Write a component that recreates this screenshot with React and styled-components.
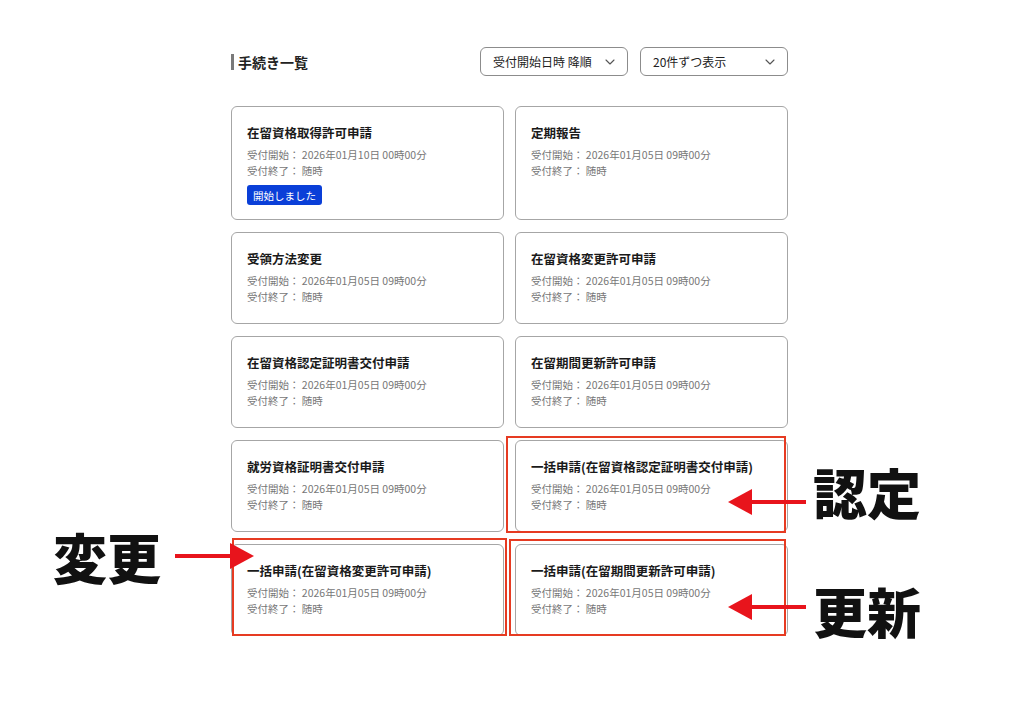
import React from "react";
import styled, { createGlobalStyle } from "styled-components";

const GlobalStyle = createGlobalStyle`
  html, body {
    margin: 0;
    padding: 0;
    background: #ffffff;
  }
  body {
    font-family: "Noto Sans CJK JP", "Noto Sans", sans-serif;
    color: #1a1a1a;
  }
`;

const Screen = styled.div`
  position: relative;
  width: 1024px;
  height: 701px;
  overflow: hidden;
  background: #fff;
`;

const Panel = styled.section`
  width: 557px;
  margin-left: 231px;
  padding-top: 47px;
`;

const Header = styled.div`
  display: flex;
  align-items: center;
  justify-content: space-between;
  height: 29px;
`;

const Title = styled.h2`
  margin: 0;
  padding-left: 4px;
  border-left: 3px solid #7a7a7a;
  font-size: 14px;
  line-height: 16px;
  font-weight: 700;
  color: #222;
`;

const Controls = styled.div`
  display: flex;
  gap: 12px;
`;

const Select = styled.div`
  box-sizing: border-box;
  width: 148px;
  height: 29px;
  padding: 0 12px 0 12px;
  display: flex;
  align-items: center;
  justify-content: space-between;
  border: 1px solid #8c8c8c;
  border-radius: 6px;
  font-size: 12px;
  color: #222;
  background: #fff;
`;

const Grid = styled.div`
  margin-top: 30px;
  display: grid;
  grid-template-columns: 273px 273px;
  column-gap: 11px;
  row-gap: 12px;
`;

const Card = styled.article`
  box-sizing: border-box;
  min-height: 92px;
  padding: 18px 15px 18px;
  border: 1px solid #a6a6a6;
  border-radius: 6px;
  background: #fff;
`;

const CardTitle = styled.h3`
  margin: 0 0 6px;
  font-size: 12.5px;
  line-height: 16px;
  font-weight: 700;
  color: #1a1a1a;
  white-space: nowrap;
`;

const InfoLine = styled.p`
  margin: 0;
  font-size: 10.5px;
  line-height: 16px;
  color: #777;
  white-space: nowrap;
`;

const Badge = styled.div`
  display: flex;
  align-items: center;
  width: fit-content;
  height: 20px;
  margin: 6px 0 -4px;
  padding: 0 6px;
  border-radius: 3px;
  background: #0a3fd8;
  color: #fff;
  font-size: 10.5px;
`;

const Overlay = styled.div`
  position: absolute;
  inset: 0;
  pointer-events: none;
`;

const RedFrame = styled.div`
  position: absolute;
  box-sizing: border-box;
  border: 2px solid #e63b22;
`;

const Label = styled.span`
  position: absolute;
  font-size: 54px;
  line-height: 1;
  font-weight: 900;
  color: #111;
  white-space: nowrap;
`;

const ArrowSvg = styled.svg`
  position: absolute;
  overflow: visible;
`;

const Chevron = () => (
  <svg width="10" height="6" viewBox="0 0 10 6" fill="none">
    <path d="M1 1l4 4 4-4" stroke="#555" strokeWidth="1.1" strokeLinecap="round" strokeLinejoin="round" />
  </svg>
);

// arrow drawn in a box; "dir" = which way the head points
const Arrow = ({ x, y, length, dir }) => {
  const head = 24;
  const half = 13;
  const left = dir === "left";
  const line = left ? `M${head - 2} 0 H${length}` : `M0 0 H${length - head + 2}`;
  const tip = left
    ? `M0 0 L${head} ${-half} L${head} ${half} Z`
    : `M${length} 0 L${length - head} ${-half} L${length - head} ${half} Z`;
  return (
    <ArrowSvg style={{ left: x, top: y }} width={length} height="1">
      <path d={line} stroke="#e8141c" strokeWidth="4" />
      <path d={tip} fill="#e8141c" />
    </ArrowSvg>
  );
};

const procedures = [
  { title: "在留資格取得許可申請", start: "2026年01月10日 00時00分", started: true },
  { title: "定期報告" },
  { title: "受領方法変更" },
  { title: "在留資格変更許可申請" },
  { title: "在留資格認定証明書交付申請" },
  { title: "在留期間更新許可申請" },
  { title: "就労資格証明書交付申請" },
  { title: "一括申請(在留資格認定証明書交付申請)" },
  { title: "一括申請(在留資格変更許可申請)" },
  { title: "一括申請(在留期間更新許可申請)" },
];

export default function App() {
  return (
    <Screen>
      <GlobalStyle />
      <Panel>
        <Header>
          <Title>手続き一覧</Title>
          <Controls>
            <Select>
              <span>受付開始日時 降順</span>
              <Chevron />
            </Select>
            <Select>
              <span>20件ずつ表示</span>
              <Chevron />
            </Select>
          </Controls>
        </Header>
        <Grid>
          {procedures.map((p) => (
            <Card key={p.title}>
              <CardTitle>{p.title}</CardTitle>
              <InfoLine>受付開始： {p.start || "2026年01月05日 09時00分"}</InfoLine>
              <InfoLine>受付終了： 随時</InfoLine>
              {p.started && <Badge>開始しました</Badge>}
            </Card>
          ))}
        </Grid>
      </Panel>

      <Overlay>
        <RedFrame style={{ left: 506, top: 436, width: 280, height: 97 }} />
        <RedFrame style={{ left: 509, top: 539, width: 277, height: 97 }} />
        <RedFrame style={{ left: 232, top: 538, width: 275, height: 98 }} />

        <Arrow x={728} y={502} length={78} dir="left" />
        <Arrow x={728} y={607} length={78} dir="left" />
        <Arrow x={175} y={556} length={79} dir="right" />

        <Label style={{ left: 813, top: 465 }}>認定</Label>
        <Label style={{ left: 813, top: 584 }}>更新</Label>
        <Label style={{ left: 53, top: 530 }}>変更</Label>
      </Overlay>
    </Screen>
  );
}
